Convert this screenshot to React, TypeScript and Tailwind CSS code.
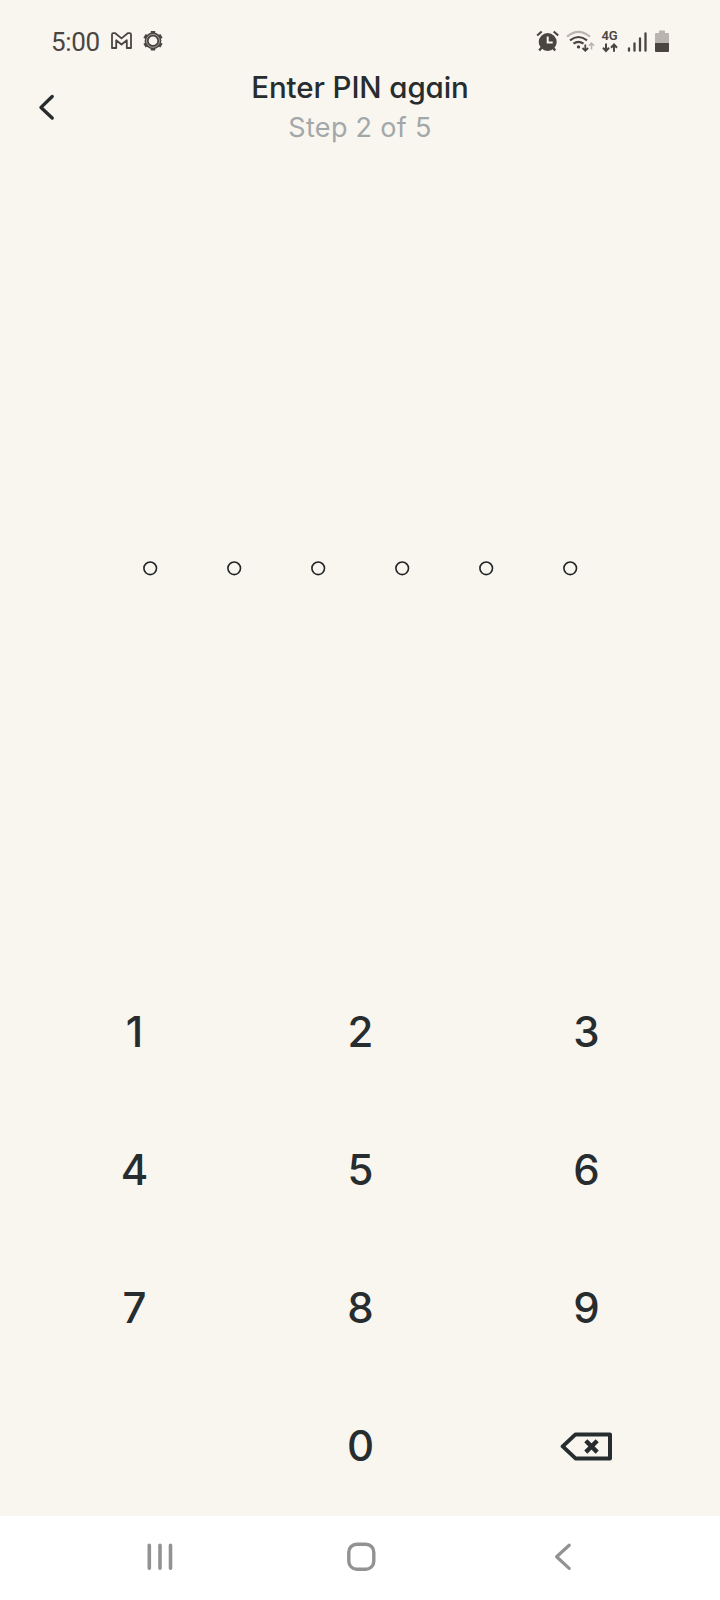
import type { ReactNode } from "react";

function Key({ label, children }: { label: string; children?: ReactNode }) {
  return (
    <button
      aria-label={label}
      className="flex items-center justify-center pb-[2px] pl-px font-['Inter',sans-serif] text-[42px] leading-none font-medium text-[#272c2f]"
    >
      {children ?? label}
    </button>
  );
}

function StatusBar() {
  return (
    <div className="flex h-[64px] items-start justify-between pt-[27px] pr-[50px] pl-[51px] text-[#4b4542]">
      <div className="flex">
        <span className="w-[60px] font-['Roboto',sans-serif] text-[26px] leading-[31px] tracking-[-0.3px] whitespace-nowrap">5:00</span>
        <svg width="56" height="30" viewBox="0 0 56 30" fill="none" stroke="currentColor">
          <path d="M1 7.5Q1 6.2 2.3 6.2H4.3L10.5 11.4L16.7 6.2H18.7Q20 6.2 20 7.5V21H15.8V13.2L10.5 17.5L5.2 13.2V21H1Z" strokeWidth="1.8" strokeLinejoin="round" />
          <circle cx="42" cy="13.8" r="8.4" fill="currentColor" stroke="none" />
          <path d="M42 4V23.6M33.5 8.9L50.5 18.7M33.5 18.7L50.5 8.9" strokeWidth="4.4" />
          <circle cx="42" cy="13.8" r="6.5" stroke="#f9f6ef" strokeWidth="0.5" />
          <circle cx="42" cy="13.8" r="4.3" fill="#f9f6ef" stroke="none" />
        </svg>
      </div>
      <svg className="mt-px" width="136" height="30" viewBox="0 0 136 30" fill="none" stroke="currentColor">
        <g transform="translate(0.7 -0.5)">
          <path d="M7 20L4.5 23M18 20L20.5 23" strokeWidth="2.4" />
          <circle cx="13" cy="14.5" r="9" fill="currentColor" stroke="none" />
          <path d="M2.5 8L7 4M19 4L23.5 8" strokeWidth="2.2" />
          <path d="M13 9V15H18" stroke="#f9f6ef" strokeWidth="2" />
        </g>
        <path d="M33 8.7Q44.5 -1 56 8.7" stroke="#b9b4af" strokeWidth="2.2" />
        <path d="M36 12.3Q44.5 5.7 53 12.3M39.5 15.7Q44.5 11.9 49.5 15.7" strokeWidth="2.1" />
        <circle cx="44.5" cy="18.9" r="1.7" fill="currentColor" stroke="none" />
        <path d="M51.3 16.5V22.5M48.5 20L51.3 22.8L54.1 20" strokeWidth="1.8" />
        <path d="M57.5 21.5V15.7M54.9 17.8L57.5 15.2L60.1 17.8" stroke="#b9b4af" strokeWidth="1.6" />
        <text x="67.5" y="12" fill="currentColor" stroke="none" fontFamily="Roboto, sans-serif" fontSize="13" fontWeight="600" textLength="16">4G</text>
        <path d="M72 15.5V23M69 19.8L72 23L75 19.8M80 23.7V16.7M77 19.7L80 16.5L83 19.7" strokeWidth="2" />
        <path d="M95 20.5V22.7M100.5 15.5V22.7M106 10.5V22.7M111.5 5.5V22.7" strokeWidth="2.3" strokeLinecap="round" />
        <path d="M121 6Q121 5 122 5H125V2.5H131V5H134Q135 5 135 6V16H121Z" fill="#b9b4af" stroke="none" />
        <path d="M121 15H135V23Q135 24 134 24H122Q121 24 121 23Z" fill="currentColor" stroke="none" />
      </svg>
    </div>
  );
}

export default function App() {
  return (
    <div className="flex h-[1600px] w-[720px] flex-col bg-[#f9f6ef]">
      <StatusBar />
      <header className="grid h-[90px] grid-cols-[120px_1fr_120px]">
        <button aria-label="Back" className="flex items-start pt-[30px] pl-[37px]">
          <svg width="20" height="28" viewBox="0 0 20 28" fill="none">
            <path d="M15.2 2.5L4 13.4L15.2 24" stroke="#272c2f" strokeWidth="3.4" strokeLinecap="round" strokeLinejoin="round" />
          </svg>
        </button>
        <div className="flex flex-col items-center">
          <h1 className="h-[47px] font-['Inter',sans-serif] text-[29.5px] leading-[46px] font-medium tracking-[-0.1px] whitespace-nowrap text-[#272c2f] [font-feature-settings:'cv11']">
            Enter PIN again
          </h1>
          <p className="font-['Inter',sans-serif] text-[27px] leading-[34px] tracking-[0.3px] text-[#a2a8aa]">Step 2 of 5</p>
        </div>
      </header>
      <main className="flex flex-1 flex-col">
        <div className="flex flex-1 justify-center gap-[68px] pt-[406px]">
          {[0, 1, 2, 3, 4, 5].map((i) => (
            <svg key={i} width="16" height="16" viewBox="0 0 16 16" fill="none">
              <circle cx="8.2" cy="8.3" r="6.3" stroke="#202426" strokeWidth="1.6" />
            </svg>
          ))}
        </div>
        <div className="ml-[21px] grid w-[678px] grid-cols-3 grid-rows-[repeat(4,138px)]">
          {["1", "2", "3", "4", "5", "6", "7", "8", "9"].map((n) => (
            <Key key={n} label={n} />
          ))}
          <span />
          <Key label="0" />
          <Key label="Delete">
            <svg width="54" height="30" viewBox="0 0 54 30" fill="none" stroke="#272c2f">
              <path d="M15.5 3.4H50V27.4H15.5L2.7 15.4Z" strokeWidth="4" strokeLinejoin="round" />
              <path d="M25.8 9.7L37.2 21.1M37.2 9.7L25.8 21.1" strokeWidth="4.4" />
            </svg>
          </Key>
        </div>
      </main>
      <nav className="flex h-[84px] items-start bg-white pt-[24px] pl-[144px] text-[#929292]">
        <svg width="32" height="34" viewBox="0 0 32 34" stroke="currentColor" strokeWidth="3.6" strokeLinecap="round">
          <path d="M5.3 5.3V28.2M16 5.3V28.2M26.5 5.3V28.2" />
        </svg>
        <svg className="ml-[169px]" width="32" height="34" viewBox="0 0 32 34" fill="none" stroke="currentColor" strokeWidth="3.4">
          <rect x="3.8" y="4.2" width="25" height="25" rx="8" />
        </svg>
        <svg className="ml-[176px]" width="24" height="34" viewBox="0 0 24 34" fill="none" stroke="currentColor" strokeWidth="3.2" strokeLinecap="round" strokeLinejoin="round">
          <path d="M16.2 5.2L3.6 16.8L16.2 28.4" />
        </svg>
      </nav>
    </div>
  );
}
